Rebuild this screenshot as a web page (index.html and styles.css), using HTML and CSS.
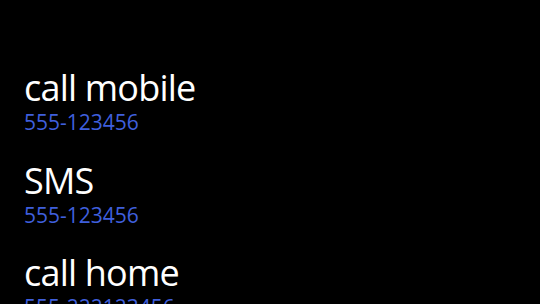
FILE: index.html
```html
<html>

<head>
    <link rel="stylesheet" href="styles.css">
    <title>Contact actions</title>
</head>

<body>
    <ul class="actions">
        <li class="action">
            <div class="title">call mobile</div>
            <div class="subtitle">555-123456</div>
        </li>
        <li class="action">
            <div class="title">SMS</div>
            <div class="subtitle">555-123456</div>
        </li>
        <li class="action">
            <div class="title">call home</div>
            <div class="subtitle">555-222123456</div>
        </li>
    </ul>
</body>

</html>
```

FILE: styles.css
```css
html,
body {
    margin: 0;
    background: #000;
    height: 100%;
    overflow: hidden;
}

body {
    font-family: "Open Sans", "Noto Sans", sans-serif;
    color: #fff;
}

.actions {
    list-style: none;
    margin: 0;
    padding: 66px 0 0 24px;
    display: flex;
    flex-direction: column;
    gap: 22.5px;
}

.title {
    font-size: 36px;
    line-height: 43px;
    letter-spacing: -0.8px;
}

.subtitle {
    font-size: 21px;
    line-height: 27px;
    color: #3f5fdc;
}
```
